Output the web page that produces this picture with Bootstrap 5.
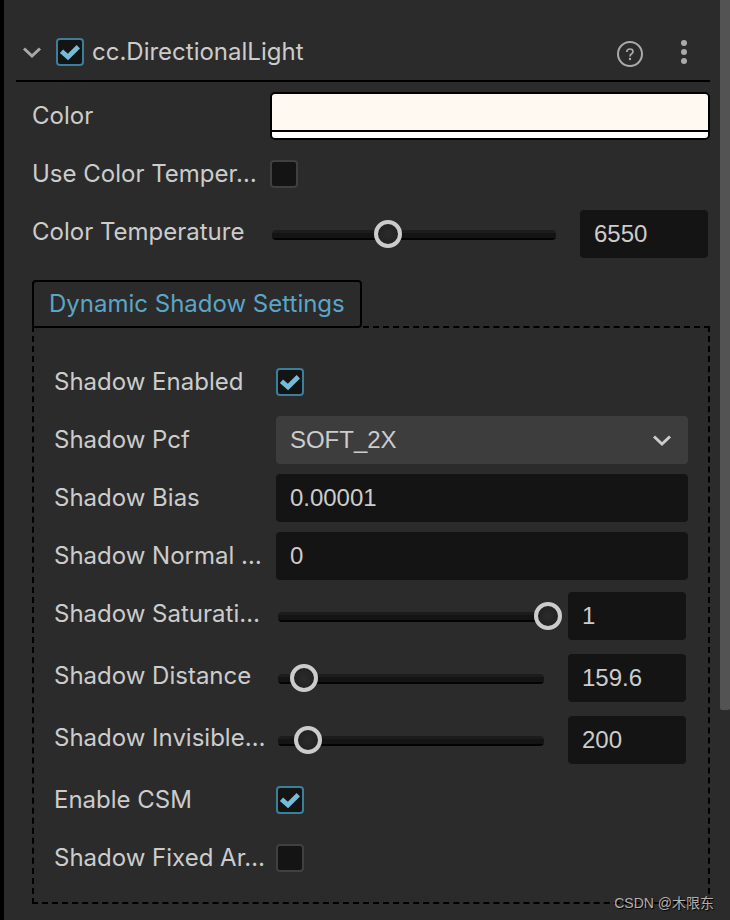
<!DOCTYPE html>
<html lang="en" data-bs-theme="dark">
<head>
<meta charset="utf-8">
<meta name="viewport" content="width=device-width, initial-scale=1">
<title>cc.DirectionalLight</title>
<link href="https://cdn.jsdelivr.net/npm/bootstrap@5.3.0/dist/css/bootstrap.min.css" rel="stylesheet">
<style>
  :root { --panel: #2b2b2b; --well: #141414; --ink: #cccccc; }
  body { background: var(--panel); color: var(--ink); font: 24px/32px Inter, sans-serif; border-left: 4px solid #000; }
  .inspector { padding: 24px 10px 16px 12px; }
  .head-bar { height: 58px; border-bottom: 2px solid #000; }
  .head-bar .fold { width: 40px; }
  .head-bar .check-box + label { padding-left: 8px; }
  .icon-btn { border: 0; background: none; padding: 0; color: #aaa; line-height: 0; }
  .help-btn { margin-right: 30px; }
  .props { display: grid; gap: 10px; }
  .main-props { padding: 10px 0 20px 16px; }
  .prop-row { min-height: 48px; }
  .prop-row > .prop-name { flex: 0 0 35%; line-height: 48px; white-space: nowrap; overflow: hidden; }
  .main-props .prop-name { flex-basis: 238px; }
  .slide-row { min-height: 52px; }
  .slide-row > .prop-ctl { padding: 2px 2px 0 2px; }
  .check-box.form-check-input { width: 28px; height: 28px; margin: 0; border: 2px solid #404040; border-radius: 4px; background-color: var(--well); float: none; }
  .check-box.form-check-input:checked { border-color: #3b7f9b; background-color: var(--well); background-size: 24px 24px;
    background-image: url("data:image/svg+xml,%3Csvg xmlns='http://www.w3.org/2000/svg' viewBox='0 0 24 24'%3E%3Cpath d='M3.500 11.200L10 17L20.300 6.800' fill='none' stroke='%2375bcd9' stroke-width='4.800'/%3E%3C/svg%3E"); }
  .field.form-control, .field.form-select { height: 48px; border: 0; border-radius: 4px; padding: 0 14px; color: var(--ink); background-color: var(--well); font: 24px/48px "Liberation Sans", Arial, sans-serif; }
  .field.form-select { background-color: #3d3d3d; background-position: right 16px center; background-size: 20px 20px;
    background-image: url("data:image/svg+xml,%3Csvg xmlns='http://www.w3.org/2000/svg' viewBox='0 0 20 20'%3E%3Cpath d='M2 6.500L10 14L18 6.500' fill='none' stroke='%23cccccc' stroke-width='3'/%3E%3C/svg%3E"); }
  .num.form-control { flex: 0 0 128px; }
  .group-box .num.form-control { flex-basis: 118px; }
  .swatch { height: 48px; padding: 0; border: 2px solid #000; border-radius: 5px; background: linear-gradient(#fff9f2 36px, #000 36px 38px, #fff 38px); }
  /* the rail stops 18px short of the thumb's travel */
  .slider { display: grid; align-items: center; height: 48px; margin-right: 6px; }
  .slider::before { content: ""; grid-area: 1 / 1; height: 10px; margin: 2px 18px 0 0; border-radius: 4px; background: linear-gradient(#1c1c1c 3px, #141414 3px 8px, #030303 8px); }
  .slider input { grid-area: 1 / 1; width: 100%; min-width: 0; height: 28px; margin: 0; appearance: none; background: none; }
  .slider input::-webkit-slider-thumb { appearance: none; width: 28px; height: 28px; border: 4px solid #ccc; border-radius: 50%; background: radial-gradient(#2b2b2b, #1e1e1e); }
  .slider input::-moz-range-thumb { box-sizing: border-box; width: 28px; height: 28px; border: 4px solid #ccc; border-radius: 50%; background: #242424; }
  .group-wrap { padding-left: 16px; }
  .group-tab { height: 48px; margin-bottom: -2px; padding: 0 15px; border: 2px solid #000; border-radius: 4px 4px 4px 0; background: var(--panel); color: #5ba5c7; line-height: 44px; }
  .group-box { padding: 30px 20px 20px; border: 2px dashed #000; }
  .scroll-rail { flex: 0 0 10px; }
  .scroll-thumb { height: 77.2vh; background: #535353; border-radius: 0 0 2px 2px; }
  .edge-grip { top: 544px; left: -4px; width: 2px; height: 4px; background: #444; }
  .credit { right: 16px; bottom: 7px; color: #b0b0b0; font: 14px/20px "Liberation Sans", "Noto Sans CJK SC", sans-serif; text-shadow: 1px 1px 1px #000; }
</style>
<script src="https://cdn.jsdelivr.net/npm/bootstrap@5.3.0/dist/js/bootstrap.bundle.min.js"></script>
</head>
<body>
<div class="d-flex position-relative min-vh-100">
  <main class="inspector flex-grow-1">
    <header class="head-bar d-flex align-items-center">
      <button class="icon-btn fold text-start" type="button" aria-label="Collapse">
        <svg width="32" height="24" viewBox="0 0 32 24" fill="none" stroke="#a8a8a8" stroke-width="3"><path d="M8 8.500L16 16L24 8.500"/></svg>
      </button>
      <input class="form-check-input check-box" type="checkbox" id="enabled" checked>
      <label for="enabled">cc.DirectionalLight</label>
      <button class="icon-btn help-btn ms-auto" type="button" aria-label="Help">
        <svg width="28" height="32" viewBox="0 0 28 32" fill="none" stroke="#aaa" stroke-width="2"><circle cx="14" cy="18" r="12"/><path d="M10.800 16Q10.900 13 13.900 13Q17 13 17 15.500Q17 17 15.400 18Q14 18.900 14 20.400" stroke-width="1.700"/><circle cx="14" cy="23" r="1.200" fill="#aaa" stroke="none"/></svg>
      </button>
      <button class="icon-btn me-3" type="button" aria-label="More">
        <svg width="20" height="32" viewBox="0 0 20 32" fill="#aaa"><circle cx="10" cy="7" r="3"/><circle cx="10" cy="16" r="3"/><circle cx="10" cy="25" r="3"/></svg>
      </button>
    </header>

    <section class="props main-props">
      <div class="prop-row d-flex">
        <label class="prop-name" for="color">Color</label>
        <button class="swatch flex-grow-1" type="button" id="color" aria-label="Color"></button>
      </div>
      <div class="prop-row d-flex align-items-center">
        <label class="prop-name" for="useTemp">Use Color Temper…</label>
        <input class="form-check-input check-box" type="checkbox" id="useTemp">
      </div>
      <div class="prop-row slide-row d-flex">
        <label class="prop-name" for="temp">Color Temperature</label>
        <div class="prop-ctl d-flex flex-grow-1">
          <div class="slider flex-grow-1"><input type="range" id="temp" min="0" max="17600" step="any" value="6550"></div>
          <input class="form-control field num" type="text" value="6550" aria-label="Color Temperature value">
        </div>
      </div>
    </section>

    <section class="group-wrap">
      <div class="group-tab d-table position-relative">Dynamic Shadow Settings</div>
      <div class="group-box props">
        <div class="prop-row d-flex align-items-center">
          <label class="prop-name" for="shEnabled">Shadow Enabled</label>
          <input class="form-check-input check-box" type="checkbox" id="shEnabled" checked>
        </div>
        <div class="prop-row d-flex">
          <label class="prop-name" for="pcf">Shadow Pcf</label>
          <select class="form-select field" id="pcf"><option>SOFT_2X</option></select>
        </div>
        <div class="prop-row d-flex">
          <label class="prop-name" for="bias">Shadow Bias</label>
          <input class="form-control field" type="text" id="bias" value="0.00001">
        </div>
        <div class="prop-row d-flex">
          <label class="prop-name" for="normal">Shadow Normal …</label>
          <input class="form-control field" type="text" id="normal" value="0">
        </div>
        <div class="prop-row slide-row d-flex">
          <label class="prop-name" for="sat">Shadow Saturati…</label>
          <div class="prop-ctl d-flex flex-grow-1">
            <div class="slider flex-grow-1"><input type="range" id="sat" min="0" max="1" step="any" value="1"></div>
            <input class="form-control field num" type="text" value="1" aria-label="Shadow Saturation value">
          </div>
        </div>
        <div class="prop-row slide-row d-flex">
          <label class="prop-name" for="dist">Shadow Distance</label>
          <div class="prop-ctl d-flex flex-grow-1">
            <div class="slider flex-grow-1"><input type="range" id="dist" min="0" max="3400" step="any" value="159.6"></div>
            <input class="form-control field num" type="text" value="159.6" aria-label="Shadow Distance value">
          </div>
        </div>
        <div class="prop-row slide-row d-flex">
          <label class="prop-name" for="invis">Shadow Invisible…</label>
          <div class="prop-ctl d-flex flex-grow-1">
            <div class="slider flex-grow-1"><input type="range" id="invis" min="0" max="3200" step="any" value="200"></div>
            <input class="form-control field num" type="text" value="200" aria-label="Shadow Invisible value">
          </div>
        </div>
        <div class="prop-row d-flex align-items-center">
          <label class="prop-name" for="csm">Enable CSM</label>
          <input class="form-check-input check-box" type="checkbox" id="csm" checked>
        </div>
        <div class="prop-row d-flex align-items-center">
          <label class="prop-name" for="fixed">Shadow Fixed Ar…</label>
          <input class="form-check-input check-box" type="checkbox" id="fixed">
        </div>
      </div>
    </section>
  </main>
  <div class="scroll-rail"><div class="scroll-thumb"></div></div>
  <span class="edge-grip position-absolute"></span>
  <span class="credit position-absolute">CSDN @木限东</span>
</div>
</body>
</html>
